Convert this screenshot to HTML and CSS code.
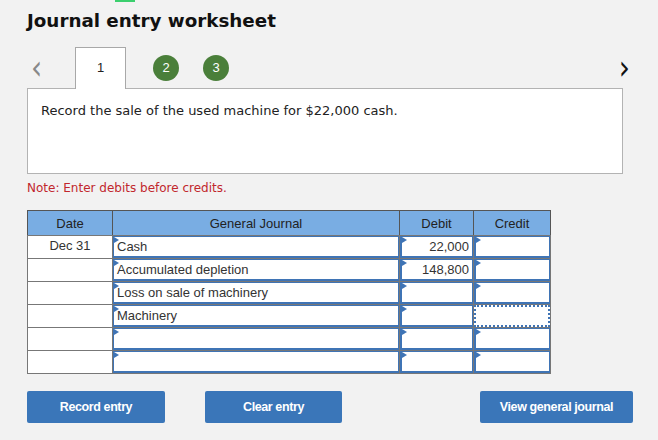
FILE: index.html
```html
<!DOCTYPE html>
<html lang="en">
<head>
    <meta charset="UTF-8">
    <meta name="viewport" content="width=device-width, initial-scale=1.0">
    <title>Journal entry worksheet</title>
    <link rel="stylesheet" href="styles.css">
</head>
<body>
    <div class="top-mark"></div>
    <div class="page">
        <h1>Journal entry worksheet</h1>

        <div class="tabs">
            <span class="arrow prev">&lsaquo;</span>
            <div class="tab current">1</div>
            <div class="step">2</div>
            <div class="step">3</div>
            <span class="arrow next">&rsaquo;</span>
        </div>

        <div class="question">
            <p>Record the sale of the used machine for $22,000 cash.</p>
        </div>

        <p class="note">Note: Enter debits before credits.</p>

        <table class="journal">
            <thead>
                <tr>
                    <th class="col-date">Date</th>
                    <th class="col-account">General Journal</th>
                    <th class="col-debit">Debit</th>
                    <th class="col-credit">Credit</th>
                </tr>
            </thead>
            <tbody>
                <tr>
                    <td class="date">Dec 31</td>
                    <td><div class="field">Cash</div></td>
                    <td><div class="field num">22,000</div></td>
                    <td><div class="field num"></div></td>
                </tr>
                <tr>
                    <td class="date"></td>
                    <td><div class="field">Accumulated depletion</div></td>
                    <td><div class="field num">148,800</div></td>
                    <td><div class="field num"></div></td>
                </tr>
                <tr>
                    <td class="date"></td>
                    <td><div class="field">Loss on sale of machinery</div></td>
                    <td><div class="field num"></div></td>
                    <td><div class="field num"></div></td>
                </tr>
                <tr>
                    <td class="date"></td>
                    <td><div class="field">Machinery</div></td>
                    <td><div class="field num"></div></td>
                    <td><div class="field num focus"></div></td>
                </tr>
                <tr>
                    <td class="date"></td>
                    <td><div class="field"></div></td>
                    <td><div class="field num"></div></td>
                    <td><div class="field num"></div></td>
                </tr>
                <tr>
                    <td class="date"></td>
                    <td><div class="field"></div></td>
                    <td><div class="field num"></div></td>
                    <td><div class="field num"></div></td>
                </tr>
            </tbody>
        </table>

        <div class="actions">
            <button class="btn record">Record entry</button>
            <button class="btn clear">Clear entry</button>
            <button class="btn view">View general journal</button>
        </div>
    </div>
</body>
</html>
```

FILE: styles.css
```css
* {
    box-sizing: border-box;
    margin: 0;
    padding: 0;
}

body {
    font-family: "DejaVu Sans", Verdana, sans-serif;
    background-color: #f2f2f2;
    color: #222;
    width: 658px;
    height: 440px;
    overflow: hidden;
    position: relative;
}

.top-mark {
    position: absolute;
    left: 115px;
    top: 0;
    width: 20px;
    height: 2px;
    background-color: #3ccf6e;
}

.page {
    padding: 10px 0 0 27px;
    width: 623px;
}

h1 {
    font-size: 18.3px;
    line-height: 22px;
    font-weight: bold;
    color: #111;
}

/* Step tabs */
.tabs {
    display: flex;
    align-items: center;
    height: 41px;
    margin-top: 15px;
    position: relative;
}

.arrow {
    font-family: "DejaVu Sans", sans-serif;
    font-size: 28px;
    line-height: 41px;
    color: #888;
}

.arrow.prev {
    margin-left: 4px;
    transform: scaleY(1.2);
}

.arrow.next {
    margin-left: auto;
    margin-right: -7px;
    color: #111;
    transform: scaleY(1.2);
}

.tab {
    width: 51px;
    margin-left: 33px;
    background-color: #fff;
    border: 1px solid #a8a8a8;
    border-bottom: none;
    text-align: center;
    line-height: 40px;
    font-family: "Liberation Sans", Arial, sans-serif;
    font-size: 13px;
    color: #222;
    position: relative;
    z-index: 2;
    align-self: flex-end;
    height: 42px;
    margin-bottom: -1px;
}

.step {
    width: 26px;
    height: 26px;
    border-radius: 50%;
    background-color: #4a7f3a;
    color: #fff;
    font-family: "Liberation Sans", Arial, sans-serif;
    font-size: 13px;
    line-height: 26px;
    text-align: center;
    margin-left: 27px;
}

.step + .step {
    margin-left: 24px;
}

.question {
    background-color: #fff;
    border: 1px solid #b3b3b3;
    height: 86px;
    padding: 14px 0 0 13px;
    position: relative;
    z-index: 1;
}

.question p {
    font-size: 13px;
    line-height: 16px;
    color: #222;
}

.note {
    font-size: 12px;
    line-height: 16px;
    color: #c1272d;
    margin-top: 6px;
}

/* Journal table */
.journal {
    border-collapse: collapse;
    margin-top: 14px;
    font-family: "Liberation Sans", Arial, sans-serif;
    font-size: 13px;
    color: #333;
    table-layout: fixed;
}

.journal th {
    background-color: #79ade3;
    border: 1px solid #555;
    border-bottom: 1px solid #777;
    height: 25px;
    font-weight: normal;
    font-size: 13px;
    color: #222;
    text-align: center;
    padding: 0;
}

.col-date { width: 85px; }
.col-account { width: 287px; }
.col-debit { width: 74px; }
.col-credit { width: 77px; }

.journal td {
    border: 1px solid #777;
    height: 23px;
    padding: 0;
    background-color: #fff;
}

.journal td.date {
    text-align: center;
    vertical-align: top;
    padding-top: 2px;
    font-size: 13px;
}

.field {
    position: relative;
    height: 22px;
    border-top: 1px solid #3f74b5;
    border-left: 1px solid #3f74b5;
    border-right: 1px solid #3f74b5;
    border-bottom: 2px solid #3f74b5;
    padding: 2px 0 0 3px;
    font-size: 13px;
    line-height: 16px;
    color: #333;
    white-space: nowrap;
    overflow: hidden;
}

.field::before {
    content: "";
    position: absolute;
    left: 0;
    top: 0;
    border-top: 3px solid transparent;
    border-bottom: 3px solid transparent;
    border-left: 5px solid #3f74b5;
}

.field.num {
    text-align: right;
    padding: 2px 3px 0 0;
    border-left-width: 2px;
}

.field.focus {
    border: 2px dotted #3f74b5;
}

.field.focus::before {
    display: none;
}

/* Buttons */
.actions {
    display: flex;
    margin-top: 17px;
    width: 606px;
}

.btn {
    height: 32px;
    background-color: #3a76b9;
    color: #fff;
    border: none;
    border-radius: 2px;
    font-family: "Liberation Sans", Arial, sans-serif;
    font-weight: bold;
    font-size: 12.5px;
    letter-spacing: -0.4px;
    cursor: pointer;
}

.btn.record {
    width: 138px;
}

.btn.clear {
    width: 137px;
    margin-left: 40px;
}

.btn.view {
    width: 153px;
    margin-left: auto;
}
```
